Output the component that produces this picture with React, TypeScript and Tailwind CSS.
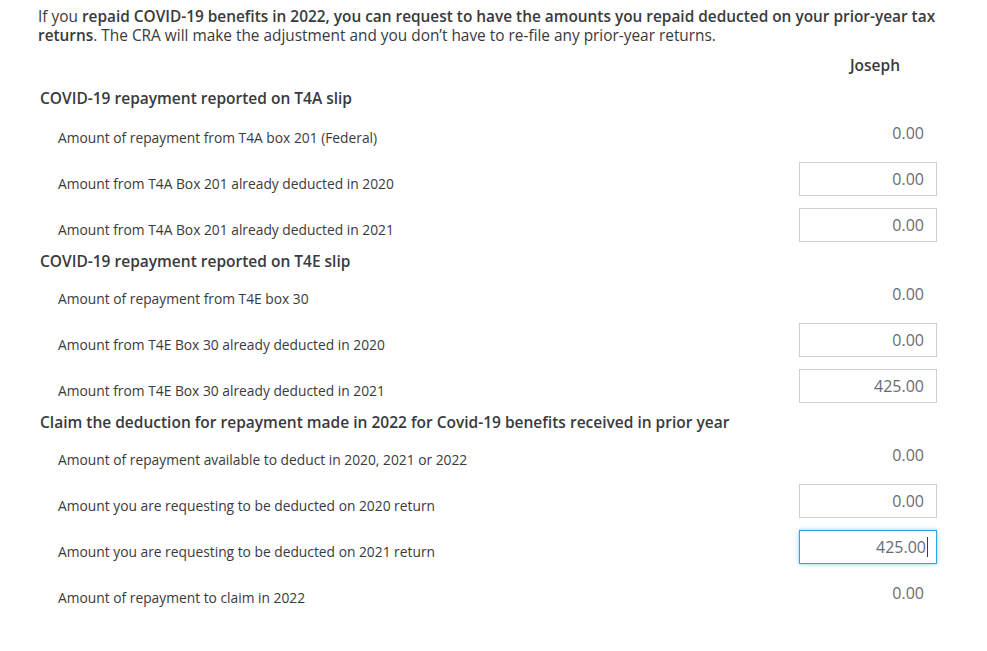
import React from "react";

type Row = { label: string; value: string; kind: "static" | "input" | "focus" };
type Section = { title: string; rows: Row[] };

const sections: Section[] = [
  {
    title: "COVID-19 repayment reported on T4A slip",
    rows: [
      { label: "Amount of repayment from T4A box 201 (Federal)", value: "0.00", kind: "static" },
      { label: "Amount from T4A Box 201 already deducted in 2020", value: "0.00", kind: "input" },
      { label: "Amount from T4A Box 201 already deducted in 2021", value: "0.00", kind: "input" },
    ],
  },
  {
    title: "COVID-19 repayment reported on T4E slip",
    rows: [
      { label: "Amount of repayment from T4E box 30", value: "0.00", kind: "static" },
      { label: "Amount from T4E Box 30 already deducted in 2020", value: "0.00", kind: "input" },
      { label: "Amount from T4E Box 30 already deducted in 2021", value: "425.00", kind: "input" },
    ],
  },
  {
    title: "Claim the deduction for repayment made in 2022 for Covid-19 benefits received in prior year",
    rows: [
      { label: "Amount of repayment available to deduct in 2020, 2021 or 2022", value: "0.00", kind: "static" },
      { label: "Amount you are requesting to be deducted on 2020 return", value: "0.00", kind: "input" },
      { label: "Amount you are requesting to be deducted on 2021 return", value: "425.00", kind: "focus" },
      { label: "Amount of repayment to claim in 2022", value: "0.00", kind: "static" },
    ],
  },
];

function ValueCell({ row }: { row: Row }) {
  if (row.kind === "static") {
    return (
      <div className="h-[34px] w-[138px] flex items-center justify-end pr-[13px] text-[16px] text-[#6b6c72]">
        {row.value}
      </div>
    );
  }
  if (row.kind === "focus") {
    return (
      <div className="h-[34px] w-[138px] flex items-center justify-end pr-[8px] text-[16px] text-[#6b6c72] border border-[#2ca5e0] shadow-[0_0_4px_rgba(44,165,224,0.6)] bg-white">
        <span>{row.value}</span>
        <span className="inline-block w-px h-[20px] bg-[#393a3d] ml-px" />
      </div>
    );
  }
  return (
    <div className="h-[34px] w-[138px] flex items-center justify-end pr-[12px] text-[16px] text-[#6b6c72] border border-[#cfcfcf] bg-white">
      {row.value}
    </div>
  );
}

export default function App() {
  return (
    <div
      className="w-[987px] h-[651px] bg-white text-[#393a3d] overflow-hidden"
      style={{ fontFamily: "'Open Sans', Lato, sans-serif" }}
    >
      <div className="pl-[38px] pr-[40px] pt-[7px]">
        <p className="text-[15.4px] leading-[19px]">
          If you <span className="font-semibold">repaid COVID-19 benefits in 2022, you can request to have the amounts you repaid deducted on your prior-year tax returns</span>. The CRA will make the adjustment and you don’t have to re-file any prior-year returns.
        </p>
        <div className="flex justify-end pr-[47px] mt-[10px] h-[20px] text-[15.5px] font-semibold leading-[20px]">
          Joseph
        </div>
        {sections.map((s, si) => (
          <div key={si}>
            <div className={`pl-[2px] text-[15.5px] font-semibold leading-[20px] ${si === 0 ? "mt-[13px] mb-[8px]" : "-mt-[3px] mb-[6px]"}`}>
              {s.title}
            </div>
            {s.rows.map((r, ri) => (
              <div key={ri} className="flex h-[46px] pr-[10px]">
                <div className="flex-1 pl-[20px] pt-[13px] text-[13.8px] leading-[18px]">{r.label}</div>
                <ValueCell row={r} />
              </div>
            ))}
          </div>
        ))}
      </div>
    </div>
  );
}
